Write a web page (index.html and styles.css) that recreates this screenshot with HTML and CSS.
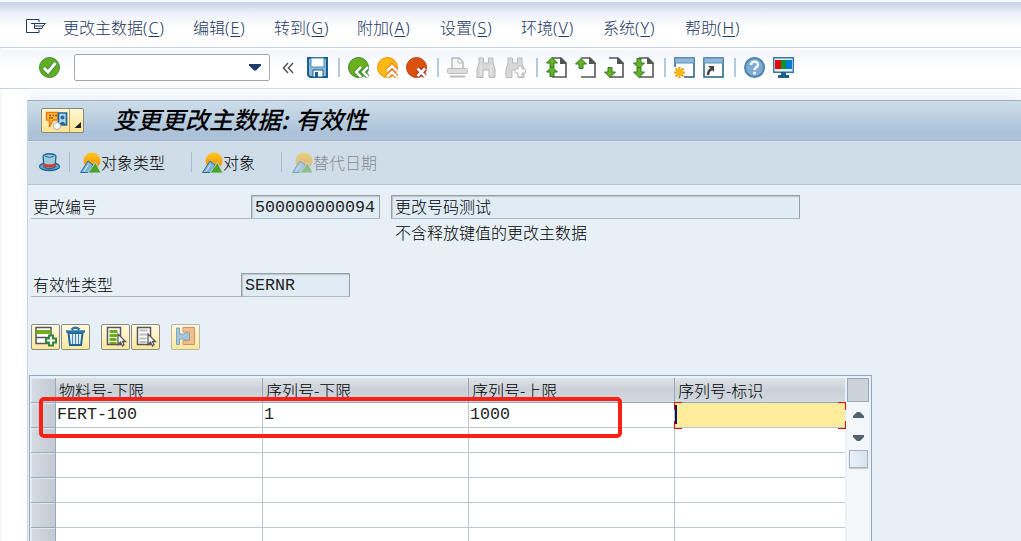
FILE: index.html
```html
<!DOCTYPE html>
<html lang="zh-CN">
  <head>
    <meta charset="utf-8">
    <title>变更更改主数据: 有效性</title>
    <link rel="stylesheet" href="styles.css">
  </head>
  <body>
    <svg class="defs" width="0" height="0">
      <defs>
        <linearGradient id="sun" x1="0" y1="0" x2="0" y2="1"><stop offset="0" stop-color="#ffc61a"/><stop offset="1" stop-color="#f28c0c"/></linearGradient>
        <symbol id="page" viewBox="0 0 21 21"><path d="M6 1H15L20 6V20H6" fill="#fff" stroke="#555" stroke-width="1.6"/><path d="M14 0V7H21Z" fill="#555"/></symbol>
        <symbol id="up" viewBox="0 0 12 11"><path d="M6 .5L11.5 6H8V10.5H4V6H.5Z" fill="#6ab023" stroke="#2c7a2c"/></symbol>
        <symbol id="scene" viewBox="0 0 21 21">
          <circle cx="12" cy="9" r="8.5" fill="url(#sun)"/>
          <path d="M.5 20.500L8 9L13 13L9.500 20.500Z" fill="#7fb4d6" stroke="#276c96"/><path d="M4 19.500L8.500 12.500" stroke="#d9ebf5" fill="none"/>
          <path d="M8 21L15.500 10.500L21 21Z" fill="#4aa52c" stroke="#cfdde8" stroke-width=".8"/>
        </symbol>
      </defs>
    </svg>

    <div class="menubar">
      <svg class="menuicon" width="20" height="15" viewBox="0 0 20 15"><path d="M13 3V.5H.5V13.500H13V10.500M5 4.500H19.500L17 7H9M8.500 5V9.500H16L17 7" fill="none" stroke="#1f3864"/></svg>
      <span>更改主数据<i>(<u>C</u>)</i></span>
      <span>编辑<i>(<u>E</u>)</i></span>
      <span>转到<i>(<u>G</u>)</i></span>
      <span>附加<i>(<u>A</u>)</i></span>
      <span>设置<i>(<u>S</u>)</i></span>
      <span>环境<i>(<u>V</u>)</i></span>
      <span>系统<i>(<u>Y</u>)</i></span>
      <span>帮助<i>(<u>H</u>)</i></span>
    </div>

    <div class="toolbar">
      <svg class="ok" viewBox="0 0 21 21"><circle cx="10.500" cy="10.500" r="10" fill="#64ae23" stroke="#3b8a35"/><path d="M5 11L9 15L16.500 6" fill="none" stroke="#3b8a35" stroke-width="5"/><path d="M5 11L9 15L16.500 6" fill="none" stroke="#fff" stroke-width="3"/></svg>
      <div class="command"><svg width="12" height="7" viewBox="0 0 12 7"><path d="M0 0H12V1.500L7 6.500H5L0 1.500Z" fill="#1f3a6b"/></svg></div>
      <svg class="collapse" width="12" height="12" viewBox="0 0 12 12"><path d="M6 1L1.500 6L6 11M11 1L6.500 6L11 11" fill="none" stroke="#555" stroke-width="1.500"/></svg>
      <svg viewBox="0 0 21 21"><path d="M1 1H20V20H3L1 18Z" fill="#8db8d8" stroke="#18618f" stroke-width="2"/><path d="M4 1H17V10H4Z" fill="#fff" stroke="#4f8eb5"/><path d="M6 13H16V20H6Z" fill="#fff" stroke="#18618f"/><path d="M8 15H11V20H8Z" fill="#18618f"/></svg>
      <b class="sep"></b>
      <svg viewBox="0 0 21 21"><path d="M10.500 .5A10 10 0 0 0 10.500 20.500H20.500V10.500A10 10 0 0 0 10.500 .5Z" fill="#fff"/><circle cx="10.500" cy="10.500" r="10" fill="#6db01f" stroke="#33862f"/><path d="M13 10L8 15L13 20M20 10L15 15L20 20" fill="none" stroke="#33862f" stroke-width="4.500"/><path d="M13 10L8 15L13 20M20 10L15 15L20 20" fill="none" stroke="#fff" stroke-width="2.500"/></svg>
      <svg viewBox="0 0 21 21"><circle cx="10.500" cy="10.500" r="10" fill="#fdb913" stroke="#ed8b13"/><path d="M10 14L15 9L20 14M10 20L15 15L20 20" fill="none" stroke="#e57917" stroke-width="4.500"/><path d="M10 14L15 9L20 14M10 20L15 15L20 20" fill="none" stroke="#fff" stroke-width="2.500"/></svg>
      <svg viewBox="0 0 21 21"><circle cx="10.500" cy="10.500" r="10" fill="#d9530f" stroke="#bd3e15"/><path d="M11.500 11.500L19 19M19 11.500L11.500 19" stroke="#a8321b" stroke-width="5"/><path d="M11.500 11.500L19 19M19 11.500L11.500 19" stroke="#fff" stroke-width="2.800"/></svg>
      <b class="sep"></b>
      <svg viewBox="0 0 21 21"><path d="M5 11V1H12L16 5V11" fill="#f7f7f7" stroke="#bbb" stroke-width="1.500"/><path d="M11 1V6H16" fill="none" stroke="#bbb"/><rect x=".5" y="11.500" width="20" height="5" rx="1" fill="#ddd" stroke="#bbb"/><path d="M3 19.500H18" stroke="#bbb" stroke-width="2"/></svg>
      <svg viewBox="0 0 21 21"><path id="glass" d="M3 1H7.500V6H12.500V1H17V6L19 12V20.500H13V13H7V20.500H1V12L3 6Z" fill="#d8d8d8" stroke="#b9b9b9"/><path d="M5 8V18M15 8V18" stroke="#eee"/></svg>
      <svg viewBox="0 0 21 21"><use href="#glass"/><path d="M13 9H17V12H20.500V16H17V20H13V16H10V12H13Z" fill="#fff" stroke="#bbb"/></svg>
      <b class="sep"></b>
      <svg viewBox="0 0 21 21"><use href="#page" width="21" height="21"/><use href="#up" width="12" height="11"/><use href="#up" y="9" width="12" height="11"/></svg>
      <svg viewBox="0 0 21 21"><use href="#page" width="21" height="21"/><use href="#up" y="1" width="12" height="11"/></svg>
      <svg viewBox="0 0 21 21"><use href="#page" x="-1" width="21" height="21"/><use href="#up" width="12" height="11" transform="translate(0 21) scale(1 -1)"/></svg>
      <svg viewBox="0 0 21 21"><use href="#page" width="21" height="21"/><use href="#up" width="12" height="11" transform="translate(0 12) scale(1 -1)"/><use href="#up" width="12" height="11" transform="translate(0 21) scale(1 -1)"/></svg>
      <b class="sep"></b>
      <svg viewBox="0 0 21 21"><path d="M1 1H20V20H1Z" fill="#fff" stroke="#205f83" stroke-width="1.500"/><path d="M1 1H20V6H1Z" fill="#8fb9da" stroke="#5d91b9"/><path d="M0 10H10V21H0Z" fill="#fff"/><path d="M5.500 10V21M0 15.500H11M1.500 11.500L9.500 19.500M9.500 11.500L1.500 19.500" stroke="#ef9a14" stroke-width="2"/><circle cx="5.500" cy="15.500" r="3.500" fill="#fcb90f"/></svg>
      <svg viewBox="0 0 21 21"><path d="M1 1H20V20H1Z" fill="#fff" stroke="#205f83" stroke-width="1.500"/><path d="M1 1H20V6H1Z" fill="#8fb9da" stroke="#5d91b9"/><path d="M5 18C5 15 6 13 9 12" fill="none" stroke="#444" stroke-width="2.500"/><path d="M5 9H11V15Z" fill="#444"/></svg>
      <b class="sep"></b>
      <svg viewBox="0 0 21 21"><circle cx="10.500" cy="10.500" r="9.500" fill="#7facd0" stroke="#4b85b0" stroke-width="2"/><path d="M7 8C7 3.500 14 3.500 14 8C14 10.500 10.500 10 10.500 13" fill="none" stroke="#fff" stroke-width="2.300"/><circle cx="10.500" cy="16" r="1.500" fill="#fff"/></svg>
      <svg viewBox="0 0 21 21"><path d="M.7 .7H20.300V15.300H.7Z" fill="#e1edf5" stroke="#347ba2" stroke-width="1.400"/><path d="M2 3H8V12H2Z" fill="#e40808"/><path d="M8 3H13V12H8Z" fill="#08942b"/><path d="M13 3H19V12H13Z" fill="#0878d8"/><path d="M8 15H13V18H16V21H5V18H8Z" fill="#1c638b"/></svg>
    </div>

    <div class="screen">
      <div class="titlebar">
        <div class="gos">
          <svg width="24" height="20" viewBox="0 0 24 20"><path d="M1.500 1.500H13V9H8L4.500 16V9H1.500Z" fill="#ffbe2e" stroke="#e8791c" stroke-width="1.500"/><path d="M4 4.500H6M7.500 4.500H9M10 4.500H12M4 6.800H8" stroke="#b63a17" stroke-width="1.300"/><path d="M13.500 2H21.500V14H13.500Z" fill="#b6d7ee" stroke="#20689a" stroke-width="1.700"/><circle cx="17.500" cy="6.500" r="2" fill="#20689a"/><path d="M14 14Q17.500 7 21 14Z" fill="#20689a"/><circle cx="12" cy="15" r="3.500" fill="#fff" stroke="#aaa"/></svg>
          <svg width="11" height="20" viewBox="0 0 11 20"><path d="M10 11V17H3.500Z" fill="#222"/></svg>
        </div>
        <h1>变更更改主数据: <em>有效性</em></h1>
      </div>

      <div class="actions">
        <svg class="hat" width="21" height="19" viewBox="0 0 21 19"><ellipse cx="10.500" cy="13.500" rx="10" ry="4" fill="#67a5c9" stroke="#1d6694" stroke-width="1.300"/><path d="M4 3C6 0 15 0 17 3L16 14C13 16 8 16 5 14Z" fill="#9cc8e0" stroke="#1d6694" stroke-width="1.300"/><path d="M4.500 10Q10.500 13 16.500 10V13Q10.500 16 4.500 13Z" fill="#d63a28"/><path d="M6 3Q10.500 6 15 3" fill="none" stroke="#1d6694"/></svg>
        <div class="action type"><svg width="21" height="21"><use href="#scene"/></svg>对象类型</div>
        <div class="action object"><svg width="21" height="21"><use href="#scene"/></svg>对象</div>
        <div class="action disabled"><svg width="21" height="21"><use href="#scene"/></svg>替代日期</div>
      </div>

      <div class="form">
        <div class="row">
          <label class="number">更改编号</label>
          <div class="field mono w130">500000000094</div>
          <div class="field desc">更改号码测试</div>
        </div>
        <div class="note">不含释放键值的更改主数据</div>
        <div class="row">
          <label class="efftype">有效性类型</label>
          <div class="field mono w110">SERNR</div>
        </div>
      </div>

      <div class="buttons">
        <div class="btn"><svg viewBox="0 0 24 22"><path d="M2.500 1.500H17.500V17.500H2.500ZM2 11.500H17" fill="#fff" stroke="#555" stroke-width="1.500"/><path d="M3 4H17V8H3Z" fill="#72ac18"/><path d="M15.500 9.500H19.500V12.500H22.500V16.500H19.500V19.500H15.500V16.500H12.500V12.500H15.500Z" fill="#fff" stroke="#32853c" stroke-width="2"/></svg></div>
        <div class="btn"><svg viewBox="0 0 24 22"><path d="M5 7H19L17.500 19H6.500Z" fill="#fff" stroke="#1d6694" stroke-width="2"/><path d="M2.500 5.500H21.500M8 3.500Q12 0 16 3.500" fill="none" stroke="#2f76a4" stroke-width="2.500"/><path d="M9 8V18M12 8V18M15 8V18" stroke="#468bb7" stroke-width="1.400"/></svg></div>
        <div class="btn gap"><svg viewBox="0 0 24 22"><path d="M4 1.500H17V18.500H4Z" fill="#fff" stroke="#555" stroke-width="1.500"/><path d="M6 4H14V7H6ZM6 8H14V11H6ZM6 12H13V15H6ZM6 16H13V18H6Z" fill="#6dac19"/><path d="M14.500 8V18.500L17 16L19 20L20.500 18.500L19 15.500H22Z" fill="#fff" stroke="#555" stroke-width="1.300"/></svg></div>
        <div class="btn"><svg viewBox="0 0 24 22"><path d="M4 1.500H17V18.500H4Z" fill="#fff" stroke="#555" stroke-width="1.500"/><path d="M6 4.500H14M6 8.500H14M6 12.500H13M6 16H13" stroke="#bbb" stroke-width="2"/><path d="M14.500 8V18.500L17 16L19 20L20.500 18.500L19 15.500H22Z" fill="#fff" stroke="#555" stroke-width="1.300"/></svg></div>
        <div class="btn gap off"><svg viewBox="0 0 24 22"><path d="M9.500 1.500H21V18.500H9.500V14.500H16V6H9.500Z" fill="#f0c088" stroke="#d8906c"/><path d="M3 2H6V8H10Q16 4 16 10.500Q16 17 10 13H6V18.500H3Z" fill="#a8c6d9" stroke="#7da4be"/></svg></div>
      </div>

      <div class="grid">
        <table>
          <tr><th class="sel"></th><th class="first">物料号-下限</th><th>序列号-下限</th><th>序列号-上限</th><th>序列号-标识</th></tr>
          <tr><th class="sel"></th><td>FERT-100</td><td>1</td><td>1000</td><td class="focus"><s class="tl"></s><s class="tr"></s><s class="bl"></s><s class="br"></s><b class="caret"></b></td></tr>
          <tr><th class="sel"></th><td></td><td></td><td></td><td></td></tr>
          <tr><th class="sel"></th><td></td><td></td><td></td><td></td></tr>
          <tr><th class="sel"></th><td></td><td></td><td></td><td></td></tr>
          <tr><th class="sel"></th><td></td><td></td><td></td><td></td></tr>
          <tr><th class="sel"></th><td></td><td></td><td></td><td></td></tr>
        </table>
        <div class="scroll">
          <div class="config"></div>
          <div class="arrow"><svg width="11" height="6"><path d="M4 0H7L11 4V6H0V4Z" fill="#51636f"/></svg></div>
          <div class="arrow"><svg width="11" height="6"><path d="M0 0H11V2L7 6H4L0 2Z" fill="#51636f"/></svg></div>
          <div class="thumb"></div>
        </div>
        <div class="mark"></div>
      </div>
    </div>
  </body>
</html>
```
FILE: styles.css
```css
* {
  box-sizing: border-box;
}

body {
  margin: 0;
  height: 541px;
  overflow: hidden;
  font-family: "Noto Sans CJK SC", sans-serif;
  font-size: 16px;
  font-weight: 300;
  line-height: 20px;
  color: #000;
  background: linear-gradient(90deg, #f8f8fa 2px, #fff 2px);
}

svg {
  display: block;
  flex: none;
}

.defs {
  position: absolute;
}

.menubar {
  display: grid;
  grid-template-columns: 37px 130px 81px 83px 83px 81px 82px 82px auto;
  align-items: center;
  height: 48px;
  padding: 6px 0 0 26px;
  border-top: 2px solid #f5f8fc;
  border-bottom: 1px solid #c8cfe0;
  background: linear-gradient(#c5d3e7, #eef2f8 12px, #fff 27px);
  color: #1f3864;
  white-space: nowrap;
}

.menuicon {
  margin-bottom: 2px;
}

.menubar i {
  font-family: "Noto Sans", sans-serif;
  font-style: normal;
  letter-spacing: 1px;
}

.menubar u {
  text-underline-offset: 2px;
}

.toolbar {
  display: flex;
  align-items: center;
  height: 39px;
  margin-top: 2px;
  margin-bottom: 2px;
  padding: 0 0 3px 39px;
  border-bottom: 1px solid #c8cfe0;
  background: linear-gradient(#f2f5fa, #fff 20px);
}

.toolbar > svg {
  width: 21px;
  height: 21px;
  margin-right: 8px;
}

.toolbar .ok {
  margin-right: 14px;
}

.command {
  display: flex;
  align-items: center;
  justify-content: flex-end;
  width: 196px;
  height: 27px;
  margin-right: 12px;
  padding-right: 8px;
  border: 1px solid #a5a9ae;
  border-radius: 2px;
  background: #fff;
}

.toolbar .collapse {
  width: 12px;
  height: 12px;
  margin-right: 13px;
}

.sep {
  width: 12px;
  height: 19px;
  background: linear-gradient(#b3cbe1, #b3cbe1) 2px 0 / 2px 19px no-repeat;
}

.screen {
  height: 441px;
  margin: 11px 0 0 27px;
  border-top: 1px solid #9eafc1;
  border-left: 1px solid #c9d4e4;
  background: #e8f0f7;
  box-shadow: 0 -9px 8px #f3f6fb;
}

.titlebar {
  display: flex;
  align-items: center;
  height: 40px;
  padding-left: 13px;
  border-bottom: 1px solid #9fb0c4;
  background: linear-gradient(#ccdde9, #c4d6e4 10px, #abc2d9 32px, #abc2d9);
}

.gos {
  display: flex;
  align-items: center;
  width: 43px;
  height: 25px;
  padding-left: 3px;
  border: 1px solid #8b8878;
  border-radius: 2px;
  background: linear-gradient(90deg, transparent 27px, #b9a869 27px, #b9a869 28px, transparent 28px), linear-gradient(#fff7d6, #fbe491);
}

.gos svg + svg {
  margin-left: 2px;
}

h1 {
  margin: 0 0 4px 29px;
  font-size: 24px;
  font-weight: 500;
  font-style: italic;
  line-height: 34px;
  white-space: nowrap;
}

h1 em {
  margin-left: 2px;
}

.actions {
  display: flex;
  align-items: center;
  height: 44px;
  padding: 0 0 2px 11px;
  border-top: 1px solid #dfe8f0;
  border-bottom: 1px solid #b5c3d3;
  background: #cfdde8;
}

.action {
  display: flex;
  align-items: center;
  height: 20px;
  padding-left: 10px;
  border-left: 1px solid #a5bdd3;
}

.hat {
  margin-right: 9px;
}

.type {
  width: 122px;
}

.object {
  width: 90px;
}

.disabled {
  color: #858b91;
}

.disabled svg {
  opacity: .5;
}

.form {
  padding: 10px 0 0 3px;
}

.row {
  display: flex;
  height: 24px;
}

.row label {
  padding-left: 2px;
  border-bottom: 1px solid #b2b5b8;
  line-height: 22px;
}

.number {
  width: 220px;
}

.efftype {
  width: 210px;
}

.field {
  padding-left: 3px;
  border: 1px solid #9b9fa2;
  border-bottom-color: #b5b8ba;
  background: #dfebf5;
  box-shadow: inset 1px 1px 1px #b7c6d0;
  line-height: 21px;
}

.mono,
td {
  font-family: "Liberation Mono", monospace;
  font-size: 16.67px;
  color: #222;
}

.mono {
  line-height: 24px;
}

.w130 {
  width: 129px;
  margin-right: 11px;
}

.desc {
  width: 409px;
}

.w110 {
  width: 109px;
}

.note {
  height: 54px;
  padding: 3px 0 0 364px;
}

.buttons {
  display: flex;
  gap: 1px;
  padding: 27px 0 0 3px;
}

.btn {
  width: 29px;
  height: 26px;
  padding: 1px;
  border: 1px solid #8e8b80;
  border-radius: 2px;
  background: linear-gradient(#fffbe3, #fbe79c);
}

.btn svg {
  width: 25px;
  height: 22px;
}

.gap {
  margin-left: 10px;
}

.off {
  border-color: #bbb79e;
}

.grid {
  position: relative;
  display: flex;
  width: 843px;
  height: 180px;
  margin: 25px 0 0 1px;
  padding: 2px 1px 0;
  border: 1px solid #8ba8c4;
  border-bottom: 0;
  background: #eaf1f7;
}

table {
  width: 814px;
  height: 175px;
  table-layout: fixed;
  border-collapse: separate;
  border-spacing: 0;
}

th,
td {
  width: 206px;
  height: 25px;
  padding: 0 0 0 1px;
  border-right: 1px solid #bcc7d4;
  border-bottom: 1px solid #bcc7d4;
  background: #fff;
  line-height: 22px;
  text-align: left;
}

th {
  padding-left: 3px;
  border-right-color: #98a8b8;
  border-bottom-color: #98a8b8;
  background: linear-gradient(#dfe3e8, #cbd0d8 12px, #d3d9e1);
  font-weight: 300;
}

.first {
  width: 207px;
}

th:last-child,
td:last-child {
  width: auto;
  border-right: 0;
}

.sel {
  width: 25px;
  box-shadow: inset 1px 1px #e3e8ee;
  background: linear-gradient(90deg, #d7dce3, #c2c9d2);
}

.focus {
  position: relative;
  background: #ffed9c;
}

/* corners of the focus frame */
.focus s {
  position: absolute;
  width: 8px;
  height: 8px;
  border: 0 solid #e40d0d;
}

.focus .tl { left: -1px; top: -1px; border-width: 1px 0 0 1px; }
.focus .tr { right: -1px; top: -1px; border-width: 1px 1px 0 0; }
.focus .bl { left: -1px; bottom: -2px; border-width: 0 0 1px 1px; }
.focus .br { right: -1px; bottom: -2px; border-width: 0 1px 1px 0; }

.caret {
  position: absolute;
  left: 0;
  top: 2px;
  width: 2px;
  height: 19px;
  background: #061558;
}

.scroll {
  width: 22px;
  margin-left: 2px;
  background: #f5f8fb;
}

.config {
  height: 24px;
  margin-bottom: 2px;
  border: 1px solid #98a8b8;
  background: #ccd2da;
}

.arrow {
  display: flex;
  align-items: center;
  justify-content: center;
  height: 21px;
  margin-bottom: 2px;
  background: #f3f7fb;
}

.thumb {
  width: 19px;
  height: 18px;
  margin: 0 0 0 2px;
  border: 1px solid #a6b2bd;
  background: linear-gradient(90deg, #e8f0f7, #d7e4ef);
  box-shadow: 0 1px 1px #ccc;
}

/* red frame round the first entry */
.mark {
  position: absolute;
  left: 9px;
  top: 21px;
  width: 583px;
  height: 41px;
  border: 4px solid #fb2014;
  border-radius: 5px;
}
```
